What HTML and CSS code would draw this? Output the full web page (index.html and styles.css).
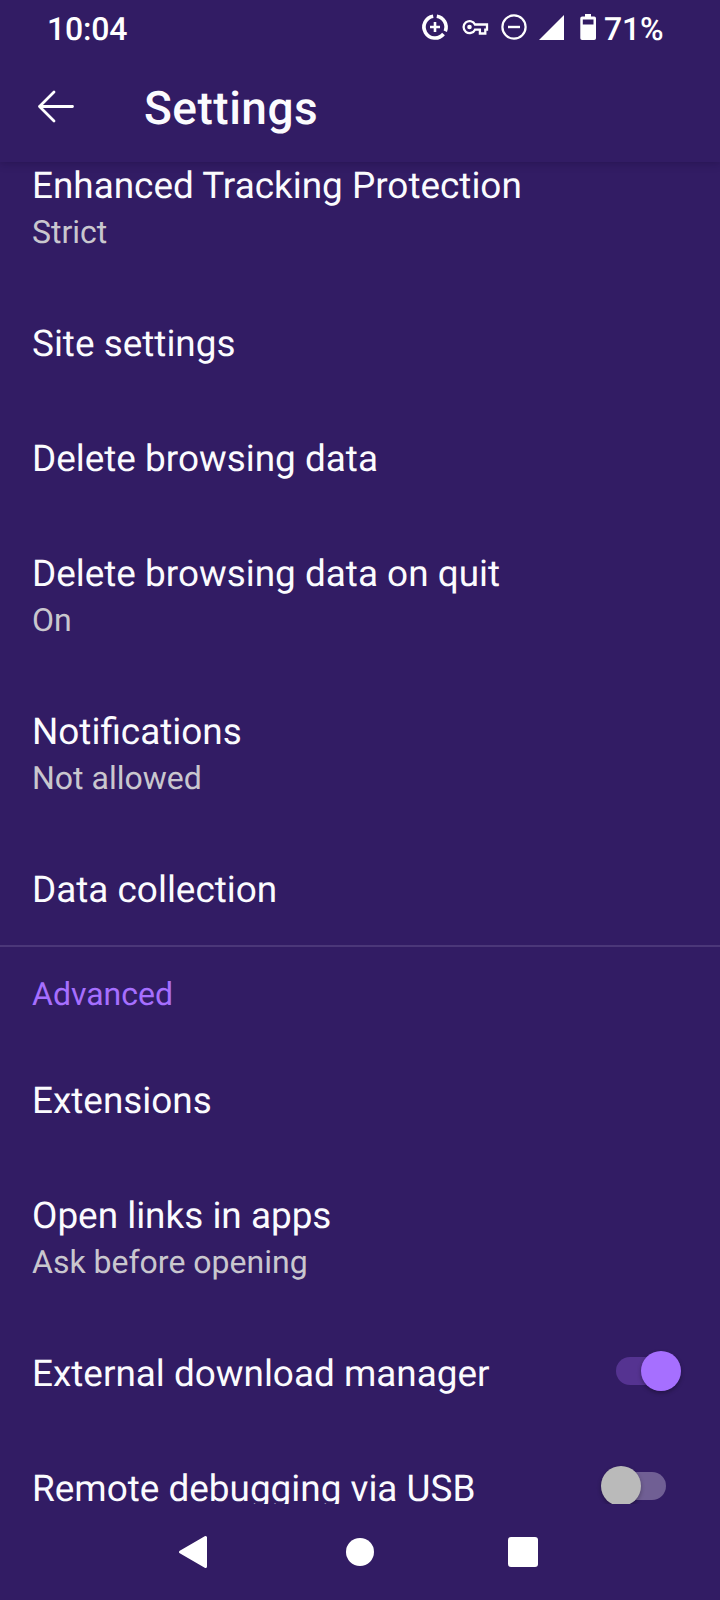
FILE: index.html
```html
<!DOCTYPE html>
<html lang="en"><head><meta charset="utf-8"><title>Settings</title><link rel="stylesheet" href="styles.css"></head>
<body>
<div class="screen">
<header class="top">
<div class="status"><span class="clock">10:04</span>
<svg class="status-icons" width="180" height="54" viewBox="0 0 180 54" fill="none" stroke="#fff">
<path d="M15.2 16.2A11 11 0 1 0 25.5 34M18.8 16.2A11 11 0 0 1 27.3 31.2" stroke-width="3.6"/><path d="M17 22v10M12 27h10" stroke-width="2.6"/>
<path d="M57 24.500H69V29.700H67.300V33.500H61.900V29.700H57A6 6 0 1 1 57 24.500Z" stroke-width="2.300"/><circle cx="51.500" cy="27" r="2.300" fill="#fff" stroke="none"/>
<circle cx="96" cy="27" r="11.6" stroke-width="2.2"/><path d="M90 27h12" stroke-width="2.4"/>
<path d="M121 40h25V15z" fill="#fff" stroke="none"/>
<path fill-rule="evenodd" d="M167 14h6v2.500h3.200q1.800 0 1.800 1.800V38.200q0 1.800-1.800 1.800H164.100q-1.800 0-1.800-1.800V18.300q0-1.800 1.800-1.800H167zM164.800 19.500v5h10.700v-5z" fill="#fff" stroke="none"/></svg><span class="percent">71%</span></div>
<div class="bar"><svg width="40" height="36" viewBox="0 0 40 36" fill="none" stroke="#fff" stroke-width="2.8" stroke-linecap="round" stroke-linejoin="round"><path d="M36.500 17.500H3.500M18 3L3.500 17.500L18 32"/></svg><h1>Settings</h1></div>
</header>
<main class="list">
<div class="row first"><div class="title">Enhanced Tracking Protection</div><div class="sub">Strict</div></div>
<div class="row"><div class="title">Site settings</div></div>
<div class="row"><div class="title">Delete browsing data</div></div>
<div class="row"><div class="title">Delete browsing data on quit</div><div class="sub">On</div></div>
<div class="row"><div class="title">Notifications</div><div class="sub">Not allowed</div></div>
<div class="row last"><div class="title">Data collection</div></div>
<div class="category">Advanced</div>
<div class="row"><div class="title">Extensions</div></div>
<div class="row"><div class="title">Open links in apps</div><div class="sub">Ask before opening</div></div>
<div class="row toggle"><div class="title">External download manager</div><div class="switch on"><i></i></div></div>
<div class="row toggle"><div class="title">Remote debugging via USB</div><div class="switch"><i></i></div></div>
</main>
<nav class="nav"><svg width="720" height="96"><path d="M205.500 33.500v29L180.500 48z" fill="#fff" stroke="#fff" stroke-width="3" stroke-linejoin="round"/><circle cx="360" cy="48" r="14" fill="#fff"/><rect x="508" y="33" width="30" height="30" rx="3" fill="#fff"/></svg></nav>
</div>
</body></html>
```
FILE: styles.css
```css
body{margin:0;background:#321c64;color:#fbfbfe;font-family:Roboto,sans-serif;text-rendering:geometricPrecision}
.screen{width:720px;height:1600px;display:flex;flex-direction:column;overflow:hidden}
.top{height:162px;flex:none;position:relative;z-index:1;background:#321c64;box-shadow:0 1px 8px rgba(20,8,50,.35)}
.status{height:56px;display:flex;align-items:center;padding-left:47px;font-size:32px;font-weight:500;color:#fff}
.clock{letter-spacing:-.2px;padding-top:2px}
.status-icons{margin-left:auto;margin-top:-2px}
.percent{width:116px;padding:2px 0 0 6px;letter-spacing:-.2px}
.bar{height:104px;display:flex;align-items:center;padding-left:36px}
.bar svg{margin-top:-3px}
.bar h1{margin:2px 0 0 68px;font-size:46px;font-weight:500;letter-spacing:.5px}
.list{height:1342px;flex:none;overflow:hidden}
.row{height:115px;box-sizing:border-box;padding:33px 32px 0}
.row:has(.sub){height:158px}
.row.first{margin-top:-34px}
.row.last{height:113px}
.title{font-size:36.9px;line-height:52px}
.sub{font-size:32px;line-height:39px;color:#c9c7ce}
.category{height:98px;border-top:2px solid #4b3779;box-sizing:border-box;padding:25px 32px;font-size:32px;line-height:44px;color:#a66fff}
.row.toggle{display:flex;justify-content:space-between;padding-right:54px}
.switch{width:50px;height:28px;margin-top:8px;border-radius:14px;background:#705f94;position:relative}
.switch i{position:absolute;width:40px;height:40px;border-radius:50%;background:#bababa;left:-15px;top:-6px;box-shadow:0 2px 4px rgba(0,0,0,.3)}
.switch.on{background:#553391}
.switch.on i{left:25px;background:#a66fff}
.nav{height:96px;flex:none}
.nav svg{display:block}
```
